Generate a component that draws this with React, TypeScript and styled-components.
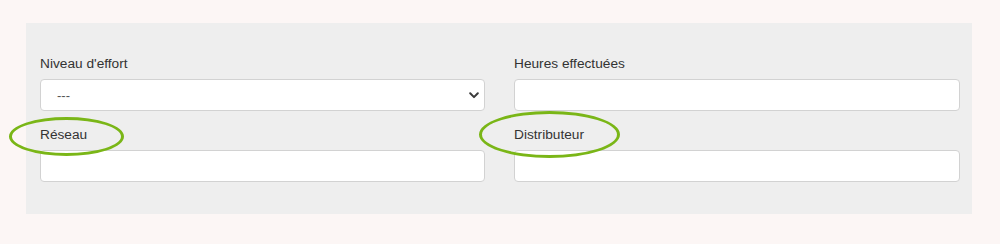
import styled, { createGlobalStyle } from 'styled-components';

const GlobalStyle = createGlobalStyle`
  html, body {
    margin: 0;
    padding: 0;
    background: #fcf6f5;
    font-family: 'Liberation Sans', Arial, sans-serif;
  }
`;

const StyledPage = styled.div`
  width: 1000px;
  height: 244px;
  padding: 23px 28px 0 26px;
  box-sizing: border-box;
`;

const StyledPanel = styled.div`
  background: #eeeeee;
  padding: 31px 12px 32px 14px;
  display: grid;
  grid-template-columns: 445px 446px;
  column-gap: 29px;
  row-gap: 14px;
`;

const StyledField = styled.div`
  display: flex;
  flex-direction: column;
`;

const StyledLabel = styled.label`
  position: relative;
  align-self: flex-start;
  font-size: 13.7px;
  line-height: 20px;
  color: #333333;
  margin-bottom: 5px;
`;

const StyledRing = styled.span<{ left: number; top: number; w: number; h: number }>`
  position: absolute;
  left: ${(p) => p.left}px;
  top: ${(p) => p.top}px;
  width: ${(p) => p.w}px;
  height: ${(p) => p.h}px;
  border: 3px solid #7ab617;
  border-radius: 50%;
  box-sizing: border-box;
  pointer-events: none;
`;

const StyledInput = styled.input`
  height: 32px;
  box-sizing: border-box;
  border: 1px solid #d2d2d2;
  border-radius: 4px;
  background: #ffffff;
  padding: 0 12px;
  font-family: inherit;
  font-size: 13px;
  outline: none;
`;

const StyledSelectBox = styled.div`
  position: relative;
  height: 32px;
  box-sizing: border-box;
  border: 1px solid #d2d2d2;
  border-radius: 4px;
  background: #ffffff;
  display: flex;
  align-items: center;
  justify-content: space-between;
  padding: 0 5px 0 16px;
`;

const StyledSelectValue = styled.span`
  font-size: 13px;
  color: #555555;
`;

const Chevron = () => (
  <svg width="10" height="7" viewBox="0 0 10 7">
    <path d="M1.2 1.3 L5 5.1 L8.8 1.3" fill="none" stroke="#3a3a3a" strokeWidth="2" strokeLinecap="round" strokeLinejoin="round" />
  </svg>
);

export default function App() {
  return (
    <StyledPage>
      <GlobalStyle />
      <StyledPanel>
        <StyledField>
          <StyledLabel>Niveau d'effort</StyledLabel>
          <StyledSelectBox>
            <StyledSelectValue>---</StyledSelectValue>
            <Chevron />
          </StyledSelectBox>
        </StyledField>
        <StyledField>
          <StyledLabel>Heures effectuées</StyledLabel>
          <StyledInput type="text" />
        </StyledField>
        <StyledField>
          <StyledLabel>
            Réseau
            <StyledRing left={-31} top={-8} w={115} h={39} />
          </StyledLabel>
          <StyledInput type="text" />
        </StyledField>
        <StyledField>
          <StyledLabel>
            Distributeur
            <StyledRing left={-35} top={-14} w={141} h={47} />
          </StyledLabel>
          <StyledInput type="text" />
        </StyledField>
      </StyledPanel>
    </StyledPage>
  );
}
